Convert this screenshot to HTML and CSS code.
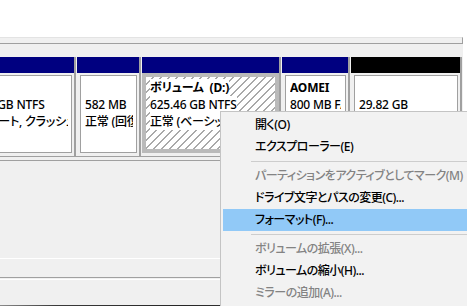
FILE: index.html
```html
<!DOCTYPE html>
<html lang="ja">
<head>
    <meta charset="UTF-8">
    <title>ディスクの管理</title>
    <link rel="stylesheet" href="styles.css">
</head>
<body>
    <div class="console">
        <div class="volume-list"></div>
        <div class="list-scroll"></div>
        <div class="disk-gap"></div>

        <div class="disk-row">
            <div class="part part-first">
                <div class="part-head"></div>
                <div class="part-body">
                    <div class="line name">(C:)</div>
                    <div class="line">237.84 GB NTFS</div>
                    <div class="line">正常 (ブート, クラッシュ ダンプ, プライマリ パーティション)</div>
                </div>
            </div>
            <div class="part part-recovery">
                <div class="part-head"></div>
                <div class="part-body">
                    <div class="line name"></div>
                    <div class="line">582 MB</div>
                    <div class="line">正常 (回復パーティション)</div>
                </div>
            </div>
            <div class="part part-data">
                <div class="part-head"></div>
                <div class="part-body selected">
                    <div class="line name"><span>ボリューム  (D:)</span></div>
                    <div class="line"><span>625.46 GB NTFS</span></div>
                    <div class="line"><span>正常 (ベーシック データ パーティション)</span></div>
                </div>
            </div>
            <div class="part part-aomei">
                <div class="part-head"></div>
                <div class="part-body">
                    <div class="line name">AOMEI</div>
                    <div class="line">800 MB FAT32</div>
                    <div class="line">正常 (プライマリ パーティション)</div>
                </div>
            </div>
            <div class="part part-free">
                <div class="part-head free"></div>
                <div class="part-body">
                    <div class="line name"></div>
                    <div class="line">29.82 GB</div>
                    <div class="line">未割り当て</div>
                </div>
            </div>
        </div>

        <div class="lower-pane"></div>
        <div class="status-pane"></div>
        <div class="status-bar"></div>
        <div class="taskbar-edge"></div>
    </div>

    <!-- 右クリックメニュー -->
    <ul class="context-menu">
        <li class="menu-item">開く(O)</li>
        <li class="menu-item">エクスプローラー(E)</li>
        <li class="menu-sep"></li>
        <li class="menu-item disabled">パーティションをアクティブとしてマーク(M)</li>
        <li class="menu-item">ドライブ文字とパスの変更(C)...</li>
        <li class="menu-item active">フォーマット(F)...</li>
        <li class="menu-sep"></li>
        <li class="menu-item disabled">ボリュームの拡張(X)...</li>
        <li class="menu-item">ボリュームの縮小(H)...</li>
        <li class="menu-item disabled">ミラーの追加(A)...</li>
    </ul>
</body>
</html>
```

FILE: styles.css
```css
* {
    box-sizing: border-box;
}

body {
    margin: 0;
    background: #fff;
    font-family: "Noto Sans", "Noto Sans CJK JP", sans-serif;
    font-size: 12px;
    font-weight: 500;
    font-feature-settings: "palt";
    color: #000;
    overflow: hidden;
}

.console {
    width: 463px;
    height: 306px;
    display: flex;
    flex-direction: column;
    background: #f0f0f0;
    overflow: hidden;
}

.volume-list {
    flex: none;
    height: 37px;
    background: #fff;
}
.list-scroll {
    flex: none;
    height: 7px;
    background: #f0f0f0;
    border-top: 1px solid #e3e3e3;
    border-bottom: 1px solid #a0a0a0;
    border-right: 1px solid #a0a0a0;
}
.disk-gap {
    flex: none;
    height: 13px;
}

/* ディスクの行 */
.disk-row {
    flex: none;
    display: flex;
    height: 104px;
    margin-left: -50px;
    padding-bottom: 3px;
    border-bottom: 1px solid #a0a0a0;
}
.part {
    flex: none;
    display: flex;
    flex-direction: column;
    border-left: 2px solid #a0a0a0;
    border-bottom: 1px solid #a0a0a0;
    padding-left: 1px;
}
.part-first {
    width: 124px;
    border-left: 0;
    padding-left: 0;
}
.part-recovery { width: 65px; }
.part-data { width: 140px; }
.part-aomei { width: 69px; }
.part-free {
    width: 114px;
    border-right: 2px solid #a0a0a0;
}

.part-head {
    flex: none;
    height: 16px;
    background: #000080;
}
.part-head.free {
    background: #000;
}

.part-body {
    flex: 1;
    margin: 2px 2px 3px 3px;
    padding: 3px 3px 0 4px;
    background: #fff;
    border: 1px solid #a0a0a0;
    overflow: hidden;
}
.part-aomei .part-body {
    padding-right: 4px;
}
.part-body.selected {
    margin: 0 0 3px 0;
    padding: 2px 4px 0;
    border: 4px solid #bababa;
    background: repeating-linear-gradient(135deg, #fff 0, #fff 4.4px, #a9a9a9 4.4px, #a9a9a9 5.66px);
}
.part-body.selected span {
    background: #fff;
}

.line {
    height: 17px;
    line-height: 17px;
    white-space: pre;
    overflow: hidden;
    letter-spacing: -0.2px;
}
.line.name {
    font-weight: bold;
}

.lower-pane {
    flex: none;
    height: 98px;
    border-bottom: 1px solid #fff;
}
.status-pane {
    flex: none;
    height: 19px;
    border-bottom: 1px solid #a0a0a0;
}
.status-bar {
    flex: 1;
    margin-top: 1px;
    border-top: 1px solid #fff;
}
.taskbar-edge {
    flex: none;
    height: 1px;
    background: linear-gradient(to right, #8a8a8a 0, #3a3a3a 12%, #262626 40%, #4a4a4a 70%, #333 100%);
}

/* コンテキストメニュー */
.context-menu {
    position: absolute;
    left: 220px;
    top: 111px;
    width: 270px;
    margin: 0;
    padding: 2px;
    list-style: none;
    background: #f2f2f2;
    border: 1px solid #c4c4c4;
}
.menu-item {
    height: 22px;
    line-height: 22px;
    padding-left: 32px;
    white-space: nowrap;
    letter-spacing: -0.5px;
}
.menu-item.disabled {
    color: #838383;
}
.menu-item.active {
    background: #91c9f7;
}
.menu-sep {
    height: 1px;
    margin: 3px 0 3px 28px;
    background: #cdcdcd;
}
```
